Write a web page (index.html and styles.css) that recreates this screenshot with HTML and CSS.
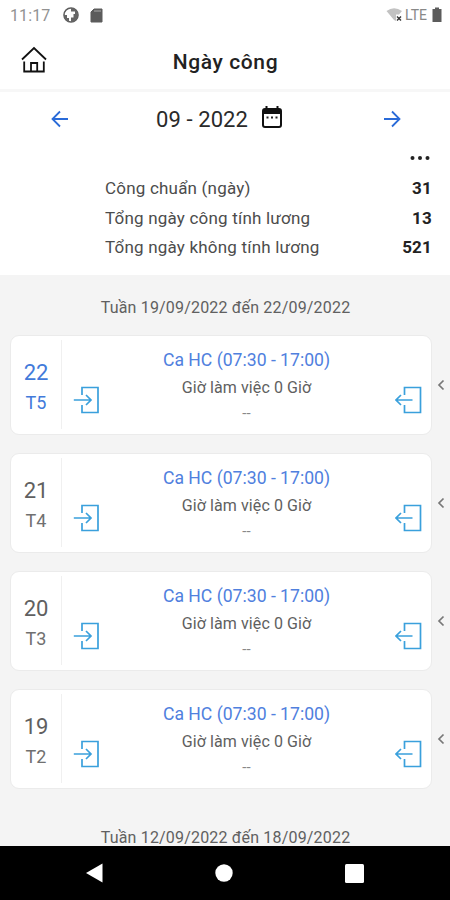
FILE: index.html
```html
<!DOCTYPE html>
<html lang="vi">
<head>
<meta charset="utf-8">
<title>Ngày công</title>
<link rel="stylesheet" href="styles.css">
</head>
<body>
<svg class="defs" width="0" height="0">
  <symbol id="enter" viewBox="0 0 28 28"><path d="M9 9V1.500H25V26.500H9V19M0.800 14H17.500M13 9L18 14L13 19"/></symbol>
  <symbol id="leave" viewBox="0 0 28 28"><path d="M9.500 9V1.500H25.500V26.500H9.500V19M17.500 14H1.500M6 9L1 14L6 19"/></symbol>
  <symbol id="chevron" viewBox="0 0 8 12"><path d="M6.500 1.500L2 6L6.500 10.500"/></symbol>
</svg>
<div class="phone">
  <div class="status">
    <span class="clock">11:17</span>
    <svg class="status-app" width="16" height="16" viewBox="0 0 16 16"><circle cx="8" cy="8" r="7" fill="#fff" stroke="#5c5c5c" stroke-width="1.600"/><path d="M8 1A7 7 0 0 1 8 15V10.500H10.500V7H12V4.500H8Z" fill="#666"/><path d="M1 8H4V11H6V15Q1 13 1 8Z" fill="#666"/></svg>
    <svg class="status-card" width="13" height="15" viewBox="0 0 13 15"><path d="M4 1H12V14H1V4Z" fill="#5c5c5c" stroke="#5c5c5c"/><path d="M4 3H11" stroke="#aaa"/></svg>
    <svg class="status-wifi" width="17" height="16" viewBox="0 0 17 16"><path d="M0.500 4Q8 -1.500 16 4L13 7.500H10V14L8 13Z" fill="#c2c2c2"/><path d="M11 9.500L15 13.500M15 9.500L11 13.500" stroke="#333" stroke-width="1.400"/></svg>
    <span class="lte">LTE</span>
    <svg class="status-battery" width="10" height="16" viewBox="0 0 10 16"><path d="M3 0.500H7V2H9.500V15H0.500V2H3Z" fill="#5c5c5c"/></svg>
  </div>
  <header class="header">
    <svg class="home" width="26" height="28" viewBox="0 0 26 28" fill="none" stroke="#111" stroke-width="1.800"><path d="M1 13.500L13 2L25 13.500"/><path d="M3.200 15.500V25.500H22.800V15.500M10 25.500V17H16.200V25.500"/></svg>
    <h1>Ngày công</h1>
  </header>
  <section class="month">
    <svg class="arrow" width="18" height="18" viewBox="0 0 18 18"><path d="M17 9H1.500M9 1.500L1.500 9L9 16.500"/></svg>
    <div class="period"><span>09 - 2022</span>
      <svg width="20" height="22" viewBox="0 0 20 22"><path d="M4.500 0V4M15.500 0V4" stroke="#111" stroke-width="2"/><rect x="1" y="3" width="18" height="18" rx="2" fill="none" stroke="#111" stroke-width="2"/><path d="M1 3H19V8H1Z" fill="#111"/><path d="M4.500 11.500H6.500M9 11.500H11M13.500 11.500H15.500" stroke="#222" stroke-width="2"/></svg>
    </div>
    <svg class="arrow" width="18" height="18" viewBox="0 0 18 18"><path d="M1 9H16.500M9 1.500L16.500 9L9 16.500"/></svg>
  </section>
  <section class="summary">
    <svg class="more" width="20" height="6" viewBox="0 0 20 6"><circle cx="2.500" cy="3" r="2"/><circle cx="10" cy="3" r="2"/><circle cx="17.500" cy="3" r="2"/></svg>
    <div class="total"><span>Công chuẩn (ngày)</span><b>31</b></div>
    <div class="total"><span>Tổng ngày công tính lương</span><b>13</b></div>
    <div class="total"><span>Tổng ngày không tính lương</span><b>521</b></div>
  </section>
  <main class="list">
    <h2>Tuần 19/09/2022 đến 22/09/2022</h2>
    <div class="row">
      <article class="card">
        <div class="day today"><span class="date">22</span><span class="weekday">T5</span></div>
        <svg class="door"><use href="#enter"/></svg>
        <div class="shift"><div class="name">Ca HC (07:30 - 17:00)</div><div class="hours">Giờ làm việc 0 Giờ</div><div class="none">--</div></div>
        <svg class="door"><use href="#leave"/></svg>
      </article>
      <svg class="chevron"><use href="#chevron"/></svg>
    </div>
    <div class="row">
      <article class="card">
        <div class="day"><span class="date">21</span><span class="weekday">T4</span></div>
        <svg class="door"><use href="#enter"/></svg>
        <div class="shift"><div class="name">Ca HC (07:30 - 17:00)</div><div class="hours">Giờ làm việc 0 Giờ</div><div class="none">--</div></div>
        <svg class="door"><use href="#leave"/></svg>
      </article>
      <svg class="chevron"><use href="#chevron"/></svg>
    </div>
    <div class="row">
      <article class="card">
        <div class="day"><span class="date">20</span><span class="weekday">T3</span></div>
        <svg class="door"><use href="#enter"/></svg>
        <div class="shift"><div class="name">Ca HC (07:30 - 17:00)</div><div class="hours">Giờ làm việc 0 Giờ</div><div class="none">--</div></div>
        <svg class="door"><use href="#leave"/></svg>
      </article>
      <svg class="chevron"><use href="#chevron"/></svg>
    </div>
    <div class="row">
      <article class="card">
        <div class="day"><span class="date">19</span><span class="weekday">T2</span></div>
        <svg class="door"><use href="#enter"/></svg>
        <div class="shift"><div class="name">Ca HC (07:30 - 17:00)</div><div class="hours">Giờ làm việc 0 Giờ</div><div class="none">--</div></div>
        <svg class="door"><use href="#leave"/></svg>
      </article>
      <svg class="chevron"><use href="#chevron"/></svg>
    </div>
    <h2 class="next">Tuần 12/09/2022 đến 18/09/2022</h2>
  </main>
  <nav class="nav">
    <svg width="18" height="20" viewBox="0 0 18 20"><path d="M1 10L17.500 0.500V19.500Z"/></svg>
    <svg width="18" height="18" viewBox="0 0 18 18"><circle cx="9" cy="9" r="8.700"/></svg>
    <svg width="19" height="19" viewBox="0 0 19 19"><rect width="19" height="19" rx="1.500"/></svg>
  </nav>
</div>
</body>
</html>
```
FILE: styles.css
```css
* { box-sizing: border-box; }
body { margin: 0; font-family: Roboto, sans-serif; color: #333; }
svg { display: block; flex: none; }
.defs { position: absolute; }
.phone { width: 450px; height: 900px; display: flex; flex-direction: column; overflow: hidden; background: #fff; }
.status { height: 30px; flex: none; display: flex; align-items: center; padding: 0 8px 0 10px; }
.clock { width: 53px; font-size: 16px; letter-spacing: .1px; color: #929292; }
.status-app { margin-right: 11px; }
.status-wifi { margin-left: auto; }
.lte { width: 27px; margin-left: 2px; font-size: 14px; color: #888; }
.header { height: 62px; flex: none; display: grid; grid-template-columns: 26px 1fr 26px; align-items: center; padding: 0 20px 0 21px; border-bottom: 3px solid #f7f7f7; }
.header h1 { margin: 4px 0 0; text-align: center; font-size: 21px; font-weight: 500; letter-spacing: .6px; color: #222; }
.month { height: 54px; flex: none; display: flex; align-items: center; justify-content: space-between; padding: 0 49px 0 51px; }
.arrow { fill: none; stroke: #2a6bd8; stroke-width: 1.8; }
.period { display: flex; align-items: center; gap: 14px; margin-right: 14px; font-size: 22px; letter-spacing: .1px; color: #2a2a2a; }
.period svg { margin-top: -4px; }
.summary { height: 129px; flex: none; padding: 9px 18px 0 105px; }
.more { margin: 0 2px 12px auto; fill: #222; }
.total { height: 29.8px; display: flex; align-items: center; justify-content: space-between; font-size: 17px; letter-spacing: .2px; color: #4c4c4c; }
.total b { font-weight: 700; color: #222; }
.list { flex: 1; min-height: 0; overflow: hidden; background: #f4f4f4; padding-left: 10px; }
.list h2 { margin: 0 9px 0 0; padding-top: 23px; height: 60px; line-height: 20px; text-align: center; font-size: 16px; font-weight: 400; letter-spacing: .18px; color: #606060; white-space: nowrap; }
.row { height: 118.1px; display: flex; align-items: flex-start; gap: 5px; }
.card { width: 422px; height: 100px; display: flex; border: 1px solid #ebebeb; border-radius: 9px; background: #fff; }
.day { width: 51px; margin: 4px 0 5px; padding-top: 20px; border-right: 1px solid #f0f0f0; display: flex; flex-direction: column; align-items: center; color: #606060; }
.date { font-size: 22px; line-height: 26px; }
.weekday { font-size: 18px; line-height: 34px; color: #707070; }
.today, .today .weekday { color: #427ada; }
.door { width: 28px; height: 28px; margin: 50px 0 0 11px; fill: none; stroke: #3aa0dc; stroke-width: 1.7; }
.shift { flex: 1; text-align: center; padding: 10px 5px 0 0; }
.shift + .door { margin: 50px 8px 0 -2px; }
.name { font-size: 17.6px; line-height: 28px; color: #5080de; }
.hours { font-size: 16px; line-height: 27px; letter-spacing: .1px; color: #606060; }
.none { font-size: 15px; line-height: 24px; color: #888; }
.chevron { width: 8px; height: 12px; margin-top: 44px; fill: none; stroke: #777; stroke-width: 1.7; }
.list h2.next { padding-top: 21px; }
.nav { height: 54px; flex: none; background: #000; display: flex; align-items: center; justify-content: space-between; padding: 0 86px 0 85px; fill: #fff; }
```
